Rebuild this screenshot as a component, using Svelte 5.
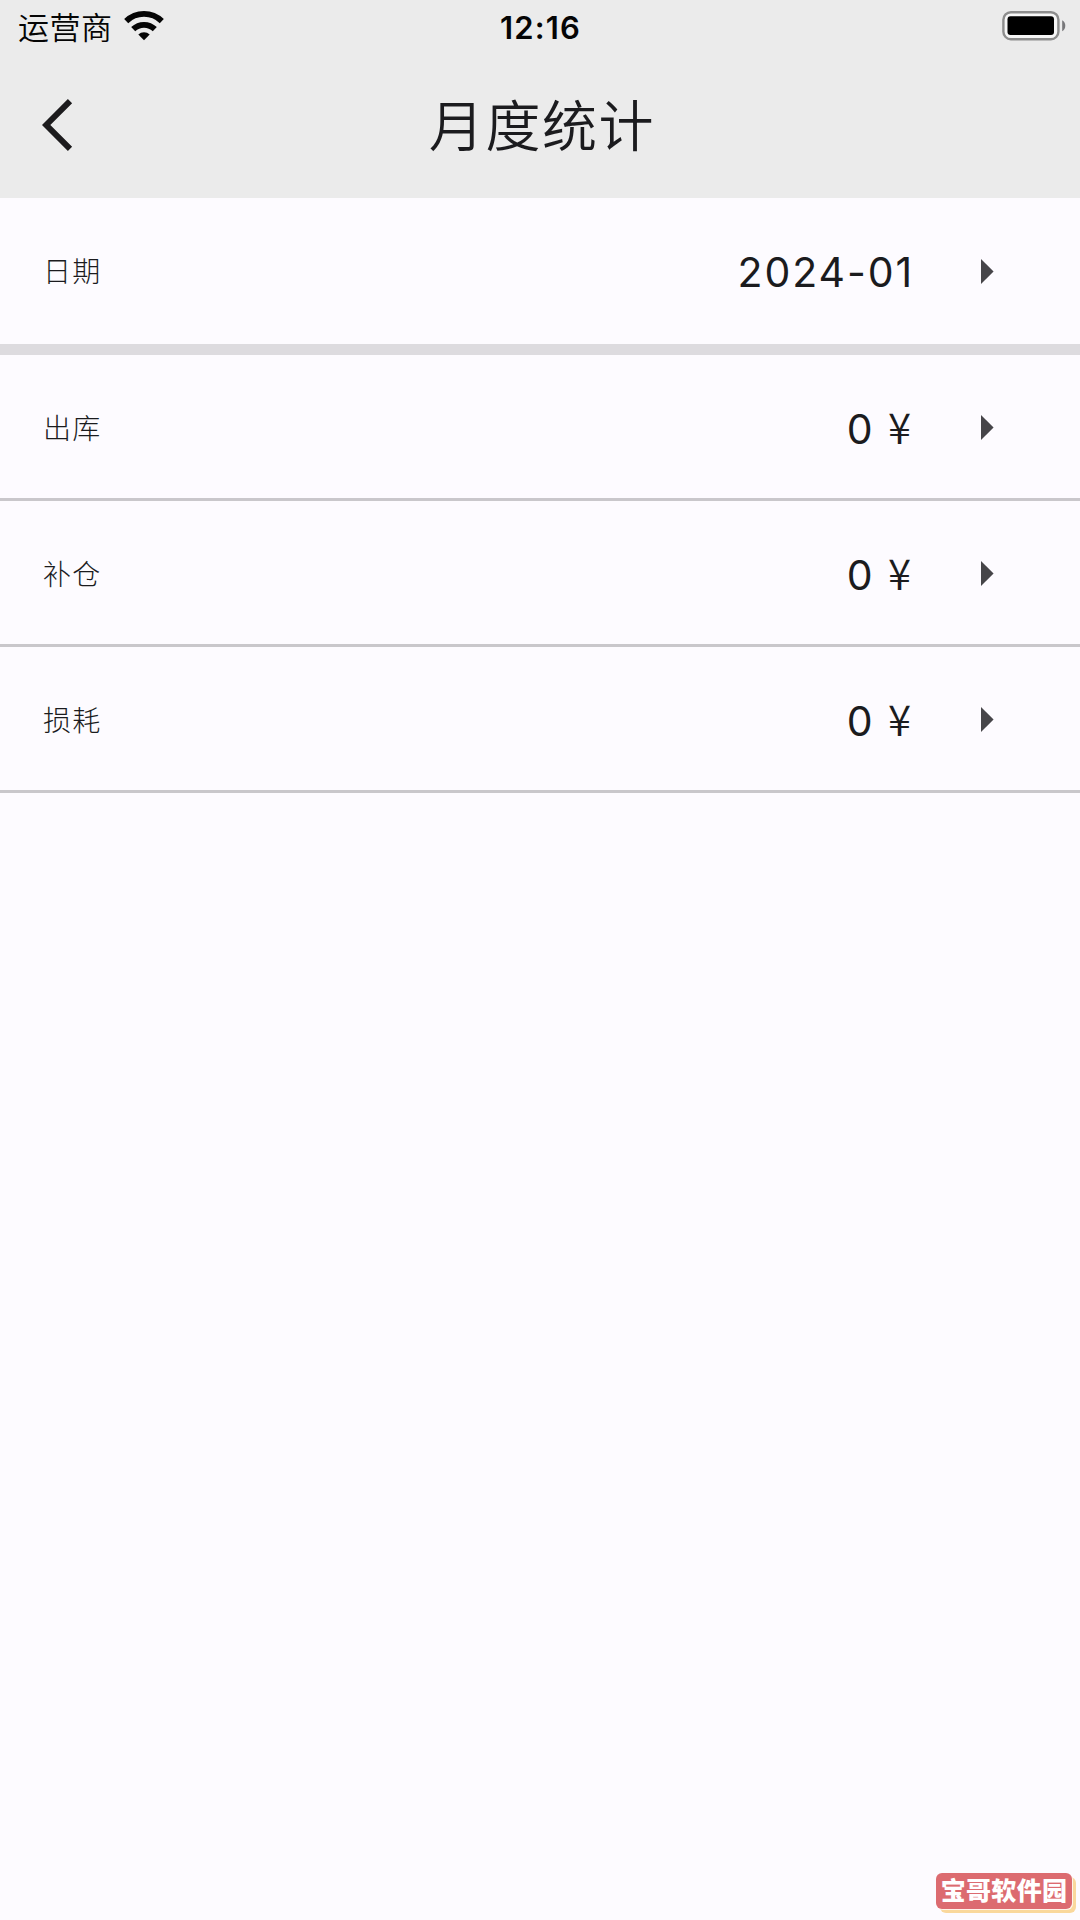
<script lang="ts">
    interface Entry {
        label: string;
        amount: number;
    }

    const carrier = '运营商';
    const time = '12:16';
    const month = '2024-01';

    const entries: Entry[] = [
        {label: '出库', amount: 0},
        {label: '补仓', amount: 0},
        {label: '损耗', amount: 0}
    ];
</script>

{#snippet arrow()}
    <svg class="row__arrow" viewBox="0 0 13 25">
        <path d="M0 0L12.6 12.5L0 25Z" fill="#464549"/>
    </svg>
{/snippet}

<div class="screen">
    <header class="header">
        <div class="status">
            <div class="status__left">
                <span class="status__carrier">{carrier}</span>
                <svg class="status__wifi" viewBox="0 0 40 30">
                    <g fill="none" stroke="#050505" stroke-width="5.8">
                        <path d="M2.2 10.2A25.5 25.5 0 0 1 37.8 10.2"/>
                        <path d="M9.2 18.2A15.5 15.5 0 0 1 30.8 18.2"/>
                    </g>
                    <path d="M20 29.3L14.3 23.6A8.3 8.3 0 0 1 25.7 23.6Z" fill="#050505"/>
                </svg>
            </div>
            <span class="status__time">{time}</span>
            <svg class="status__battery" viewBox="0 0 64 30">
                <rect x="1.4" y="1.2" width="55" height="27" rx="7.5" fill="#f7f7f7" stroke="#8d8d8d" stroke-width="2.4"/>
                <rect x="5.5" y="5.3" width="46.5" height="18.7" rx="3" fill="#000"/>
                <path d="M60.2 9.3Q63.3 11 63.3 14.8T60.2 20.3Z" fill="#77777a"/>
            </svg>
        </div>
        <div class="title-bar">
            <button class="title-bar__back" aria-label="返回">
                <svg viewBox="0 0 32 52">
                    <path d="M28 2.2L4.2 26L28 49.8" fill="none" stroke="#1c1b1d" stroke-width="6"/>
                </svg>
            </button>
            <h1 class="title-bar__title">月度统计</h1>
        </div>
    </header>

    <main>
        <div class="row">
            <span class="row__label">日期</span>
            <span class="row__value">{month}</span>
            {@render arrow()}
        </div>
        <div class="divider"></div>
        {#each entries as entry}
            <div class="row row--line">
                <span class="row__label">{entry.label}</span>
                <span class="row__value">{entry.amount} <span class="row__unit">¥</span></span>
                {@render arrow()}
            </div>
        {/each}
    </main>

    <div class="badge">宝哥软件园</div>
</div>

<style>
    :global(body) {
        margin: 0;
        background: #fdfbff;
    }

    .screen {
        position: relative;
        width: 1080px;
        height: 1920px;
        overflow: hidden;
        background: #fdfbff;
        color: #1b1b1e;
        font-family: Inter, "Noto Sans CJK SC", sans-serif;
    }

    .header {
        height: 198px;
        background: #ebebeb;
    }

    .status {
        display: grid;
        grid-template-columns: 1fr auto 1fr;
        align-items: center;
        height: 54px;
        padding: 0 14px 0 18px;
        color: #050505;
    }

    .status__left {
        display: flex;
        align-items: center;
        gap: 11px;
    }

    .status__carrier {
        font-size: 31px;
        font-weight: 350;
        line-height: 53px;
        letter-spacing: 0.5px;
    }

    .status__wifi {
        width: 40px;
        height: 30px;
        margin-bottom: 2px;
    }

    .status__time {
        padding: 1px 3px 0 0;
        font-size: 31px;
        font-weight: 600;
        line-height: 53px;
        letter-spacing: 1.2px;
    }

    .status__battery {
        justify-self: end;
        width: 64px;
        height: 30px;
        margin-bottom: 2px;
    }

    .title-bar {
        display: grid;
        grid-template-columns: 120px 1fr 120px;
        align-items: center;
        height: 142px;
    }

    .title-bar__back {
        display: flex;
        padding: 0 0 0 42px;
        border: none;
        background: none;
    }

    .title-bar__back svg {
        width: 32px;
        height: 52px;
    }

    .title-bar__title {
        margin: 0;
        padding: 2px 0 0 4px;
        font-size: 55px;
        font-weight: 350;
        line-height: 140px;
        letter-spacing: 1.6px;
        text-align: center;
    }

    .row {
        display: flex;
        align-items: center;
        box-sizing: border-box;
        height: 146px;
        padding: 0 86px 0 43px;
    }

    .row--line {
        padding-top: 2px;
        border-bottom: 3px solid #c9c7cb;
    }

    .row__label {
        flex: 1;
        padding-top: 2px;
        font-size: 28px;
        font-weight: 300;
        line-height: 40px;
        letter-spacing: 1.3px;
    }

    .row__value {
        margin-right: 67px;
        padding-top: 2px;
        font-size: 41px;
        font-weight: 400;
        line-height: 48px;
        letter-spacing: 1.9px;
    }

    .row__unit {
        margin-right: 1px;
        font-family: "Noto Sans CJK SC", sans-serif;
        font-size: 42px;
        font-weight: 350;
        line-height: 1;
    }

    .row__arrow {
        width: 13px;
        height: 25px;
    }

    .divider {
        height: 11px;
        background: #dddbdf;
    }

    .badge {
        position: absolute;
        right: 8px;
        bottom: 11px;
        width: 136px;
        height: 36px;
        border-radius: 6px;
        background: #dc6b70;
        box-shadow: 1px 1px 0 #fff4ea, 4px 4px 0 #fad89c;
        color: #fff;
        font-size: 25px;
        font-weight: 900;
        line-height: 37px;
        letter-spacing: 0.3px;
        text-align: center;
    }
</style>
